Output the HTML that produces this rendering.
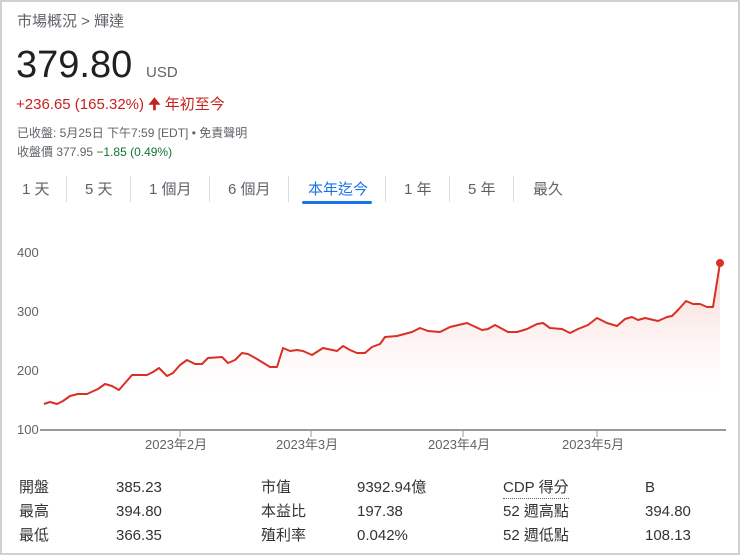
<!DOCTYPE html><html><head><meta charset="utf-8"><style>
body{margin:0;width:740px;height:555px;overflow:hidden;background:#fff;font-family:"Liberation Sans","Noto Sans CJK TC",sans-serif;}
.frame{position:absolute;left:0;top:0;width:736px;height:551px;border:2px solid #d0d0d0;}
.a{position:absolute;white-space:nowrap;}
.tab{position:absolute;top:178px;font-size:15px;color:#5f6368;}
.sep{position:absolute;top:176px;width:1px;height:26px;background:#dadce0;}
.st{position:absolute;font-size:15px;line-height:20px;height:20px;color:#333;}
</style></head><body><div class="frame"></div>
<div class="a" style="left:17px;top:10px;font-size:15px;color:#5f6368">市場概況 &gt; 輝達</div>
<div class="a" style="left:16px;top:44px;font-size:38px;color:#202124">379.80</div>
<div class="a" style="left:146px;top:64px;font-size:15px;color:#5f6368">USD</div>
<div class="a" style="left:16px;top:93px;font-size:15px;color:#c5221f">+236.65 (165.32%) <b>&#129033;</b> 年初至今</div>
<div class="a" style="left:17px;top:124px;font-size:12px;color:#5f6368">已收盤: 5月25日 下午7:59 [EDT] • 免責聲明</div>
<div class="a" style="left:17px;top:143px;font-size:12px;color:#5f6368">收盤價 377.95 <span style="color:#137333">−1.85 (0.49%)</span></div>
<div class="tab" style="left:22px">1 天</div><div class="tab" style="left:85px">5 天</div><div class="tab" style="left:149px">1 個月</div><div class="tab" style="left:228px">6 個月</div><div class="tab" style="left:308px;color:#1a73e8">本年迄今</div><div class="tab" style="left:404px">1 年</div><div class="tab" style="left:468px">5 年</div><div class="tab" style="left:533px">最久</div>
<div class="sep" style="left:66px"></div><div class="sep" style="left:130px"></div><div class="sep" style="left:209px"></div><div class="sep" style="left:288px"></div><div class="sep" style="left:385px"></div><div class="sep" style="left:449px"></div><div class="sep" style="left:513px"></div>
<div class="a" style="left:302px;top:201px;width:70px;height:3px;border-radius:2px;background:#1a73e8"></div>
<svg class="a" style="left:0;top:0" width="740" height="555">
<defs><linearGradient id="g" x1="0" y1="0" x2="0" y2="1"><stop offset="0" stop-color="#f4c7c3" stop-opacity=".8"/><stop offset="0.6" stop-color="#fce8e6" stop-opacity=".4"/><stop offset="1" stop-color="#ffffff" stop-opacity="0"/></linearGradient></defs>
<polygon fill="url(#g)" points="44,404 50,402 57,404 63,401 70,396 78,394 87,394 98,389 105,384 112,386 119,390 132,375 147,375 153,372 159,368 167,376 173,373 180,365 187,360 195,364 202,364 208,358 222,357 228,363 235,360 242,353 248,354 257,359 270,367 277,367 283,348 290,351 297,350 303,351 312,355 323,348 337,351 343,346 350,350 357,353 365,353 372,347 380,344 385,337 397,336 412,332 420,328 428,331 440,332 450,327 467,323 482,330 488,329 495,325 508,332 517,332 527,329 537,324 543,323 550,328 562,329 570,333 578,329 588,325 597,318 607,323 617,326 625,319 632,317 638,320 645,318 658,321 667,317 672,316 678,310 686,301 693,304 700,304 707,307 713,307 720,263 720,390 44,390"/>
<polyline fill="none" stroke="#d93025" stroke-width="2" stroke-linejoin="round" points="44,404 50,402 57,404 63,401 70,396 78,394 87,394 98,389 105,384 112,386 119,390 132,375 147,375 153,372 159,368 167,376 173,373 180,365 187,360 195,364 202,364 208,358 222,357 228,363 235,360 242,353 248,354 257,359 270,367 277,367 283,348 290,351 297,350 303,351 312,355 323,348 337,351 343,346 350,350 357,353 365,353 372,347 380,344 385,337 397,336 412,332 420,328 428,331 440,332 450,327 467,323 482,330 488,329 495,325 508,332 517,332 527,329 537,324 543,323 550,328 562,329 570,333 578,329 588,325 597,318 607,323 617,326 625,319 632,317 638,320 645,318 658,321 667,317 672,316 678,310 686,301 693,304 700,304 707,307 713,307 720,263"/>
<circle cx="720" cy="263" r="4" fill="#d93025"/>
<line x1="40" y1="430" x2="726" y2="430" stroke="#999" stroke-width="2"/>
<g stroke="#999"><line x1="180" y1="430" x2="180" y2="437"/><line x1="311" y1="430" x2="311" y2="437"/><line x1="463" y1="430" x2="463" y2="437"/><line x1="597" y1="430" x2="597" y2="437"/></g>
<g font-size="13" fill="#5f6368" font-family="Liberation Sans,Noto Sans CJK TC,sans-serif"><text x="17" y="257">400</text><text x="17" y="316">300</text><text x="17" y="375">200</text><text x="17" y="434">100</text>
<text x="145" y="449">2023年2月</text><text x="276" y="449">2023年3月</text><text x="428" y="449">2023年4月</text><text x="562" y="449">2023年5月</text></g>
</svg>
<div class="st" style="left:19px;top:478px">開盤</div><div class="st" style="left:116px;top:478px">385.23</div><div class="st" style="left:261px;top:478px">市值</div><div class="st" style="left:357px;top:478px">9392.94億</div><div class="st" style="left:503px;top:478px;border-bottom:1px dotted #666">CDP 得分</div><div class="st" style="left:645px;top:478px">B</div>
<div class="st" style="left:19px;top:502px">最高</div><div class="st" style="left:116px;top:502px">394.80</div><div class="st" style="left:261px;top:502px">本益比</div><div class="st" style="left:357px;top:502px">197.38</div><div class="st" style="left:503px;top:502px">52 週高點</div><div class="st" style="left:645px;top:502px">394.80</div>
<div class="st" style="left:19px;top:526px">最低</div><div class="st" style="left:116px;top:526px">366.35</div><div class="st" style="left:261px;top:526px">殖利率</div><div class="st" style="left:357px;top:526px">0.042%</div><div class="st" style="left:503px;top:526px">52 週低點</div><div class="st" style="left:645px;top:526px">108.13</div>
</body></html>
